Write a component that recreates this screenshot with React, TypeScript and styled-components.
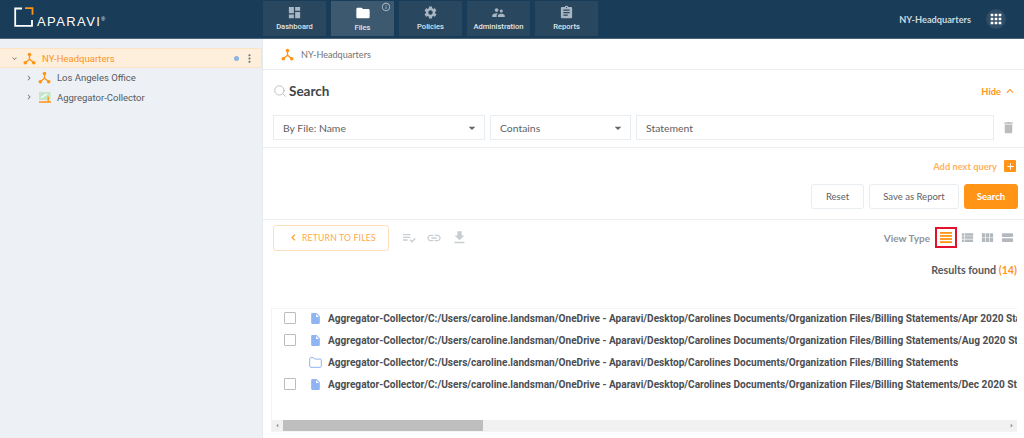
import React from 'react';
import styled, { createGlobalStyle } from 'styled-components';
import {
  MdDashboard,
  MdFolder,
  MdSettings,
  MdSupervisorAccount,
  MdAssignment,
  MdApps,
  MdDelete,
  MdFileDownload,
  MdPlaylistAddCheck,
  MdLink,
  MdViewList,
  MdViewModule,
  MdViewStream,
  MdInsertDriveFile,
  MdAdd,
  MdInfoOutline,
  MdArrowDropDown,
  MdKeyboardArrowUp,
  MdKeyboardArrowLeft,
  MdKeyboardArrowRight,
  MdKeyboardArrowDown,
  MdMoreVert,
  MdArrowLeft,
  MdArrowRight,
} from 'react-icons/md';
import { Search as SearchIcon } from 'lucide-react';

const ORANGE = '#ff9416';
const NAVY = '#193c58';

const GlobalStyle = createGlobalStyle`
  html, body { margin: 0; padding: 0; background: #fff; overflow: hidden; }
  * { box-sizing: border-box; }
  body { font-family: "Lato", "Open Sans", sans-serif; }
`;

const NetworkIcon = ({ size = 13 }: { size?: number }) => (
  <svg width={size} height={size} viewBox="0 0 16 16" fill="none">
    <path d="M8 3v6M8 9l-5 4M8 9l5 4" stroke={ORANGE} strokeWidth="1.7" />
    <circle cx="8" cy="3" r="2.2" fill={ORANGE} />
    <circle cx="2.8" cy="13.2" r="2.2" fill={ORANGE} />
    <circle cx="13.2" cy="13.2" r="2.2" fill={ORANGE} />
  </svg>
);

const CollectorIcon = () => (
  <svg width="12" height="11" viewBox="0 0 12 11">
    <rect x="0" y="0" width="11.500" height="8" fill="#c4e8c8" />
    <path d="M2 5.500 L8 2" stroke="#fff" strokeWidth="1.200" />
    <path d="M0 10h12M9.200 10V4.500" stroke={ORANGE} strokeWidth="1.300" fill="none" />
  </svg>
);

const LogoMark = () => (
  <svg width="20" height="20" viewBox="0 0 20 20" fill="none">
    <path d="M8 1.500H1.200V18.800H18V13" stroke="#fff" strokeWidth="1.800" />
    <path d="M11 1.200h7.500v6.500" stroke={ORANGE} strokeWidth="1.800" />
  </svg>
);

const LinesIcon = () => (
  <svg width="12" height="11" viewBox="0 0 12 11" fill={ORANGE}>
    <rect x="0" y="0" width="12" height="1.800" />
    <rect x="0" y="3" width="12" height="1.800" />
    <rect x="0" y="6.100" width="12" height="1.800" />
    <rect x="0" y="9.200" width="12" height="1.800" />
  </svg>
);

const OpenFolderIcon = () => (
  <svg width="13" height="11" viewBox="0 0 13 11" fill="none">
    <path
      d="M.7 1.600c0-.5.4-.9.9-.9h3l1.200 1.400h5.600c.5 0 .9.4.9.9v6.400c0 .5-.4.9-.9.9H1.600c-.5 0-.9-.4-.9-.9z"
      stroke="#8fb4f2"
      strokeWidth="1"
    />
  </svg>
);

const Page = styled.div`
  width: 1024px;
  height: 438px;
  display: flex;
  flex-direction: column;
  overflow: hidden;
`;

const Header = styled.header`
  height: 39px;
  flex: none;
  display: flex;
  align-items: flex-start;
  background: ${NAVY};
  border-bottom: 1px solid #4d6579;
`;

const LogoArea = styled.div`
  width: 263px;
  flex: none;
  height: 38px;
  display: flex;
  align-items: flex-start;
  padding: 7px 0 0 14px;
`;

const LogoText = styled.span`
  font-family: "Liberation Sans", sans-serif;
  font-size: 13px;
  letter-spacing: 1.4px;
  color: #fff;
  margin: 8px 0 0 3px;
  line-height: 14px;
  sup {
    font-size: 5px;
    vertical-align: top;
    line-height: 8px;
    letter-spacing: 0;
  }
`;

const Tabs = styled.nav`
  display: flex;
  gap: 5px;
  padding-top: 1px;
`;

const Tab = styled.div<{ $active?: boolean }>`
  position: relative;
  width: 63px;
  height: 35px;
  display: flex;
  flex-direction: column;
  align-items: center;
  padding-top: 4px;
  background: ${(p) => (p.$active ? '#3c5970' : '#29475f')};
  color: ${(p) => (p.$active ? '#fff' : '#a9b6c1')};
  svg {
    flex: none;
  }
`;

const TabLabel = styled.span`
  font-family: "Roboto", sans-serif;
  font-weight: 500;
  font-size: 7.600px;
  line-height: 11px;
  margin-top: 1px;
  color: #dfe5ea;
`;

const TabInfo = styled.span`
  position: absolute;
  top: 1px;
  right: 3px;
  display: flex;
  color: #a9b8c4;
`;

const HeaderRight = styled.div`
  margin-left: auto;
  height: 38px;
  display: flex;
  align-items: center;
  gap: 15px;
  padding-right: 18px;
  color: #cfd8df;
  font-size: 9.200px;
  font-weight: 700;
`;

const AppsButton = styled.div`
  width: 20px;
  height: 20px;
  border-radius: 50%;
  background: #2f4d66;
  display: flex;
  align-items: center;
  justify-content: center;
  color: #fff;
`;

const Body = styled.div`
  flex: 1;
  min-height: 0;
  display: flex;
`;

const Sidebar = styled.aside`
  width: 263px;
  flex: none;
  background: #edf1f5;
  padding-top: 9px;
  font-family: "Roboto", sans-serif;
  font-size: 9.500px;
  border-right: 1px solid #e4e9ed;
`;

const TreeRow = styled.div<{ $selected?: boolean; $depth?: number }>`
  height: ${(p) => (p.$selected ? '20px' : '19.500px')};
  display: flex;
  align-items: center;
  padding-left: ${(p) => (p.$depth ? '24px' : '9px')};
  color: ${(p) => (p.$selected ? ORANGE : '#56595d')};
  background: ${(p) => (p.$selected ? '#fdefdc' : 'transparent')};
  border: ${(p) => (p.$selected ? '1px solid #fbe3c6' : 'none')};
  border-left: none;
`;

const TreeCaret = styled.span`
  width: 10px;
  flex: none;
  display: flex;
  justify-content: center;
  color: #777;
  margin-right: 3px;
`;

const TreeIcon = styled.span`
  width: 15px;
  flex: none;
  display: flex;
  justify-content: center;
  margin-right: 5px;
`;

const TreeEnd = styled.span`
  margin-left: auto;
  display: flex;
  align-items: center;
  gap: 4px;
  padding-right: 5px;
  color: #6d7880;
`;

const Dot = styled.span`
  width: 5px;
  height: 5px;
  border-radius: 50%;
  background: #8db4de;
`;

const Main = styled.main`
  flex: 1;
  min-width: 0;
  display: flex;
  flex-direction: column;
  color: #4e5256;
`;

const Crumb = styled.div`
  height: 31px;
  flex: none;
  display: flex;
  align-items: center;
  gap: 7px;
  padding-left: 18px;
  border-bottom: 1px solid #e7edf0;
  font-size: 9.100px;
  color: #6f7376;
`;

const SearchHead = styled.div`
  height: 42px;
  margin-bottom: 3px;
  flex: none;
  display: flex;
  align-items: center;
  padding: 0 7px 0 10px;
`;

const SearchTitle = styled.h2`
  margin: 0 0 0 2px;
  font-size: 13.500px;
  font-weight: 700;
  color: #414549;
`;

const HideLink = styled.span`
  margin-left: auto;
  display: flex;
  align-items: center;
  gap: 2px;
  color: ${ORANGE};
  font-size: 9.300px;
  font-weight: 700;
`;

const QueryRow = styled.div`
  height: 33px;
  flex: none;
  display: flex;
  gap: 5px;
  padding: 0 6px 8px 10px;
  border-bottom: 1px solid #e7edf0;
  align-items: flex-start;
`;

const Field = styled.div<{ $width?: number }>`
  ${(p) => (p.$width ? `width: ${p.$width}px; flex: none;` : 'flex: 1;')}
  height: 25px;
  display: flex;
  align-items: center;
  padding: 0 4px 0 9px;
  border: 1px solid #e7edf0;
  font-size: 10.400px;
  color: #5d6165;
  svg {
    margin-left: auto;
    color: #666;
  }
`;

const TrashWrap = styled.span`
  width: 19px;
  height: 25px;
  flex: none;
  display: flex;
  align-items: center;
  justify-content: center;
  color: #bcbcbc;
`;

const AddQuery = styled.div`
  height: 36px;
  flex: none;
  display: flex;
  align-items: center;
  justify-content: flex-end;
  gap: 7px;
  padding-right: 8px;
  font-size: 9.300px;
  font-weight: 700;
  color: #ffb25c;
`;

const PlusBox = styled.span`
  width: 12px;
  height: 12px;
  border-radius: 1px;
  background: ${ORANGE};
  color: #fff;
  display: flex;
  align-items: center;
  justify-content: center;
`;

const Actions = styled.div`
  height: 36px;
  flex: none;
  display: flex;
  justify-content: flex-end;
  gap: 5px;
  padding: 0 6px 11px 0;
  border-bottom: 1px solid #e7edf0;
`;

const ActionButton = styled.button<{ $primary?: boolean; $width: number }>`
  width: ${(p) => p.$width}px;
  height: 25px;
  padding: 0;
  border-radius: 3px;
  font-family: inherit;
  font-size: 9.500px;
  font-weight: ${(p) => (p.$primary ? 700 : 400)};
  color: ${(p) => (p.$primary ? '#fff' : '#5d6165')};
  background: ${(p) => (p.$primary ? ORANGE : '#fff')};
  border: 1px solid ${(p) => (p.$primary ? ORANGE : '#e7edf0')};
`;

const Toolbar = styled.div`
  height: 35px;
  flex: none;
  display: flex;
  align-items: center;
  padding: 0 7px 0 10px;
`;

const ReturnButton = styled.div`
  width: 116px;
  height: 26px;
  border: 1px solid #fde0bb;
  border-radius: 3px;
  display: flex;
  align-items: center;
  padding-left: 13px;
  color: #ffa94a;
  font-size: 8.600px;
  font-weight: 400;
  letter-spacing: 0.2px;
  svg {
    color: ${ORANGE};
    margin-right: 2px;
  }
`;

const ToolIcons = styled.div`
  display: flex;
  align-items: center;
  gap: 9px;
  margin-left: 12px;
  color: #c6ced4;
`;

const ViewTypes = styled.div`
  margin-left: auto;
  display: flex;
  align-items: center;
  color: #b3b9be;
`;

const ViewLabel = styled.span`
  font-size: 10px;
  font-weight: 700;
  color: #8f9498;
  margin-right: 5px;
`;

const ViewButton = styled.span<{ $active?: boolean }>`
  width: ${(p) => (p.$active ? '22px' : '20px')};
  height: 21px;
  display: flex;
  align-items: center;
  justify-content: center;
  border: ${(p) => (p.$active ? '2px solid #e2122c' : 'none')};
`;

const ResultsLine = styled.div`
  height: 17px;
  flex: none;
  margin-top: 8px;
  padding-right: 7px;
  text-align: right;
  font-size: 10.700px;
  font-weight: 700;
  color: #55595d;
  b {
    color: ${ORANGE};
    font-weight: 700;
  }
`;

const ListPanel = styled.section`
  margin: 28px 7px 0 8px;
  width: 746px;
  height: 124px;
  flex: none;
  border: 1px solid #f3f4f5;
  border-right: none;
  display: flex;
  flex-direction: column;
  overflow: hidden;
`;

const Rows = styled.div`
  flex: 1;
  min-height: 0;
  overflow: hidden;
`;

const Row = styled.div`
  height: 22px;
  display: flex;
  align-items: center;
  white-space: nowrap;
  &:first-child {
    margin-top: -2px;
  }
`;

const CheckCell = styled.span`
  width: 37px;
  flex: none;
  display: flex;
  justify-content: flex-end;
`;

const Check = styled.span`
  width: 12px;
  height: 12px;
  border: 1px solid #bdbdbd;
  border-radius: 1px;
  margin-right: 13px;
`;

const FileCell = styled.span`
  width: 13px;
  flex: none;
  display: flex;
  justify-content: center;
  color: #8fb4f2;
  margin-right: 6px;
`;

const Path = styled.span`
  font-family: "Roboto", sans-serif;
  font-size: 10.100px;
  font-weight: 700;
  color: #4b4e52;
`;

const ScrollBar = styled.div`
  height: 11px;
  flex: none;
  display: flex;
  align-items: center;
  background: #f1f1f1;
  color: #8b8b8b;
`;

const ScrollThumb = styled.div`
  width: 200px;
  height: 11px;
  background: #bebebe;
`;

const ScrollEnd = styled.span`
  margin-left: auto;
  display: flex;
`;

const ArrowSlot = styled.span`
  width: 11px;
  display: flex;
  justify-content: center;
`;

const base =
  'Aggregator-Collector/C:/Users/caroline.landsman/OneDrive - Aparavi/Desktop/Carolines Documents/Organization Files/Billing Statements';

const files = [
  { path: `${base}/Apr 2020 Statement`, folder: false },
  { path: `${base}/Aug 2020 Statement`, folder: false },
  { path: base, folder: true },
  { path: `${base}/Dec 2020 Statement`, folder: false },
];

const tabs = [
  { label: 'Dashboard', icon: <MdDashboard size={15} /> },
  { label: 'Files', icon: <MdFolder size={16} color="#fff" />, active: true },
  { label: 'Policies', icon: <MdSettings size={15} /> },
  { label: 'Administration', icon: <MdSupervisorAccount size={15} /> },
  { label: 'Reports', icon: <MdAssignment size={15} /> },
];

export default function App() {
  return (
    <Page>
      <GlobalStyle />
      <Header>
        <LogoArea>
          <LogoMark />
          <LogoText>
            APARAVI<sup>®</sup>
          </LogoText>
        </LogoArea>
        <Tabs>
          {tabs.map((t) => (
            <Tab key={t.label} $active={t.active}>
              {t.icon}
              <TabLabel>{t.label}</TabLabel>
              {t.active && (
                <TabInfo>
                  <MdInfoOutline size={10} />
                </TabInfo>
              )}
            </Tab>
          ))}
        </Tabs>
        <HeaderRight>
          NY-Headquarters
          <AppsButton>
            <MdApps size={16} />
          </AppsButton>
        </HeaderRight>
      </Header>
      <Body>
        <Sidebar>
          <TreeRow $selected>
            <TreeCaret>
              <MdKeyboardArrowDown size={9} />
            </TreeCaret>
            <TreeIcon>
              <NetworkIcon />
            </TreeIcon>
            NY-Headquarters
            <TreeEnd>
              <Dot />
              <MdMoreVert size={13} />
            </TreeEnd>
          </TreeRow>
          <TreeRow $depth={1}>
            <TreeCaret>
              <MdKeyboardArrowRight size={10} />
            </TreeCaret>
            <TreeIcon>
              <NetworkIcon />
            </TreeIcon>
            Los Angeles Office
          </TreeRow>
          <TreeRow $depth={1}>
            <TreeCaret>
              <MdKeyboardArrowRight size={10} />
            </TreeCaret>
            <TreeIcon>
              <CollectorIcon />
            </TreeIcon>
            Aggregator-Collector
          </TreeRow>
        </Sidebar>
        <Main>
          <Crumb>
            <NetworkIcon />
            NY-Headquarters
          </Crumb>
          <SearchHead>
            <SearchIcon size={14} color="#b9b9b9" strokeWidth={1.5} />
            <SearchTitle>Search</SearchTitle>
            <HideLink>
              Hide <MdKeyboardArrowUp size={14} />
            </HideLink>
          </SearchHead>
          <QueryRow>
            <Field $width={212}>
              By File: Name
              <MdArrowDropDown size={16} />
            </Field>
            <Field $width={141}>
              Contains
              <MdArrowDropDown size={16} />
            </Field>
            <Field>Statement</Field>
            <TrashWrap>
              <MdDelete size={15} />
            </TrashWrap>
          </QueryRow>
          <AddQuery>
            Add next query
            <PlusBox>
              <MdAdd size={11} />
            </PlusBox>
          </AddQuery>
          <Actions>
            <ActionButton $width={53}>Reset</ActionButton>
            <ActionButton $width={90}>Save as Report</ActionButton>
            <ActionButton $width={54} $primary>
              Search
            </ActionButton>
          </Actions>
          <Toolbar>
            <ReturnButton>
              <MdKeyboardArrowLeft size={13} />
              RETURN TO FILES
            </ReturnButton>
            <ToolIcons>
              <MdPlaylistAddCheck size={16} />
              <MdLink size={16} />
              <MdFileDownload size={17} />
            </ToolIcons>
            <ViewTypes>
              <ViewLabel>View Type</ViewLabel>
              <ViewButton $active>
                <LinesIcon />
              </ViewButton>
              <ViewButton>
                <MdViewList size={15} />
              </ViewButton>
              <ViewButton>
                <MdViewModule size={15} />
              </ViewButton>
              <ViewButton>
                <MdViewStream size={15} />
              </ViewButton>
            </ViewTypes>
          </Toolbar>
          <ResultsLine>
            Results found <b>(14)</b>
          </ResultsLine>
          <ListPanel>
            <Rows>
              {files.map((f) => (
                <Row key={f.path}>
                  <CheckCell>{!f.folder && <Check />}</CheckCell>
                  <FileCell>
                    {f.folder ? <OpenFolderIcon /> : <MdInsertDriveFile size={17} />}
                  </FileCell>
                  <Path>{f.path}</Path>
                </Row>
              ))}
            </Rows>
            <ScrollBar>
              <ArrowSlot>
                <MdArrowLeft size={9} />
              </ArrowSlot>
              <ScrollThumb />
              <ScrollEnd>
                <ArrowSlot>
                  <MdArrowRight size={9} />
                </ArrowSlot>
              </ScrollEnd>
            </ScrollBar>
          </ListPanel>
        </Main>
      </Body>
    </Page>
  );
}
